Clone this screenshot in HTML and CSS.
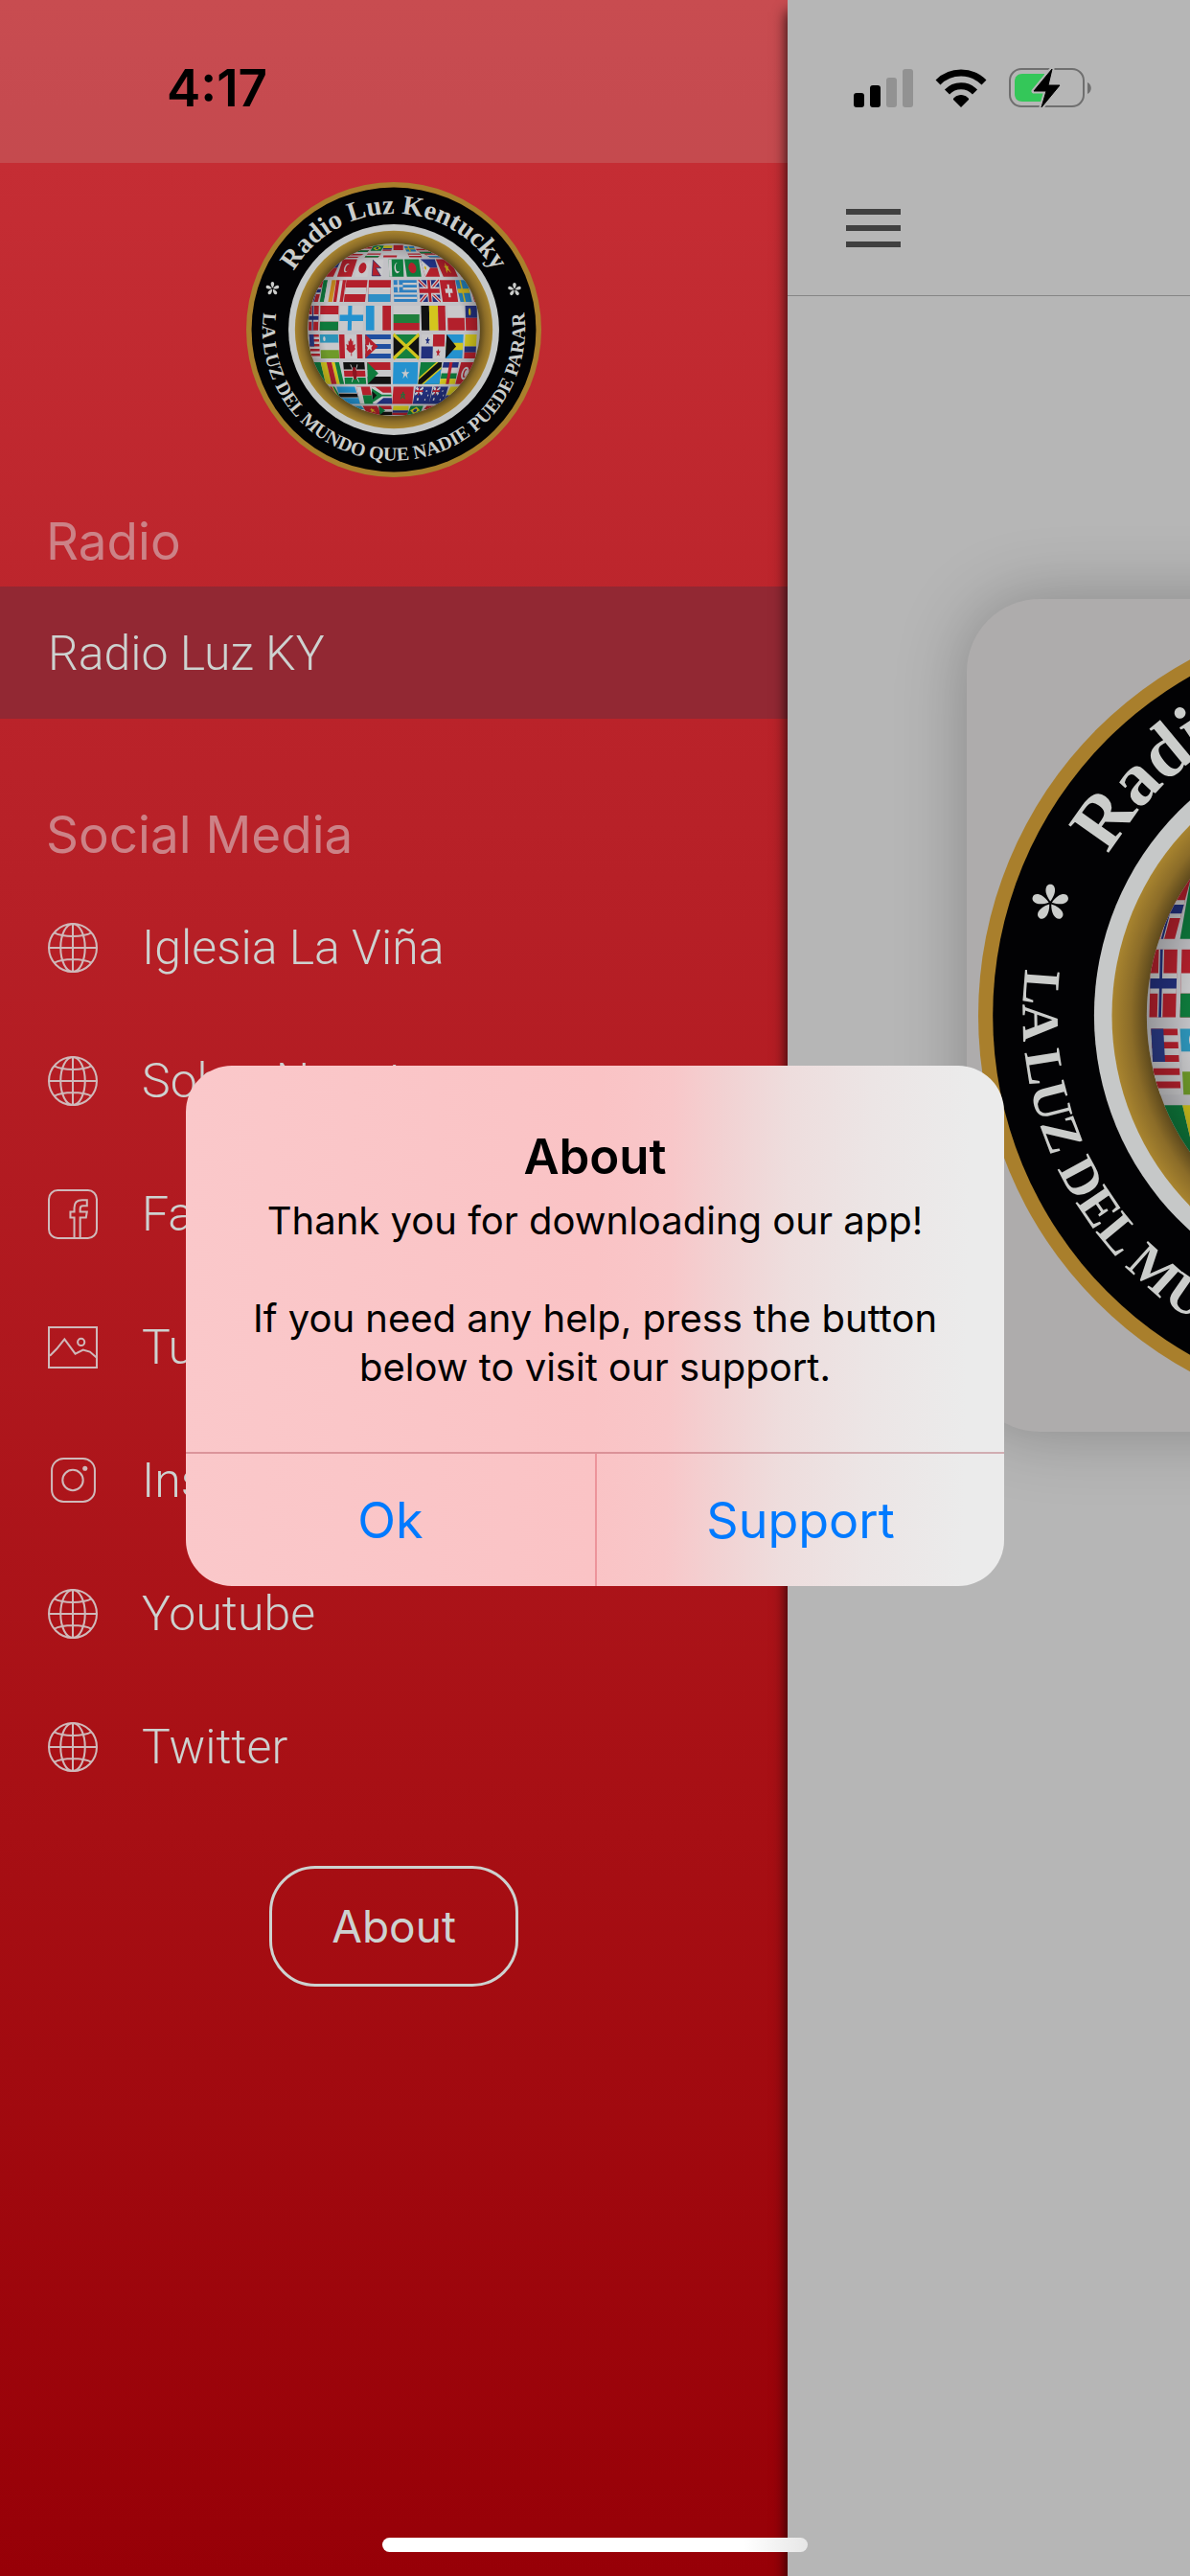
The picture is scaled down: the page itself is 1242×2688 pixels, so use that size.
FILE: index.html
```html
<!DOCTYPE html>
<html lang="en">
<head>
<meta charset="utf-8">
<meta name="viewport" content="width=device-width, initial-scale=1">
<title>Radio Luz KY</title>
<link rel="stylesheet" href="styles.css">
</head>
<body>
<svg class="defs" aria-hidden="true">
  <defs>
    <radialGradient id="ring" cx="0" cy="0" r="335" gradientUnits="userSpaceOnUse">
      <stop offset=".86" stop-color="#54421a"/>
      <stop offset=".93" stop-color="#8b6c28"/>
      <stop offset="1" stop-color="#a8842f"/>
    </radialGradient>
    <radialGradient id="shade" cx="0" cy="0" r="296" gradientUnits="userSpaceOnUse">
      <stop offset=".8" stop-color="#000" stop-opacity="0"/>
      <stop offset="1" stop-color="#000" stop-opacity=".25"/>
    </radialGradient>
    <clipPath id="ball"><circle r="292"/></clipPath>
    <path id="arc-top" d="M-393 0A393 393 0 0 1 393 0"/>
    <path id="arc-bottom" d="M-438 -80A445 445 0 1 0 438 -80"/>
    <g id="star">
      <path id="petal" d="M0-2C-9-14-6-23 0-23S9-14 0-2Z"/>
      <use href="#petal" transform="rotate(72)"/><use href="#petal" transform="rotate(144)"/>
      <use href="#petal" transform="rotate(216)"/><use href="#petal" transform="rotate(288)"/>
    </g>

    <!-- flags, each drawn in a 30 x 20 box -->
    <g id="f-red"><path fill="#b3202c" d="M0 0h30v20H0z"/></g>
    <g id="f-tr"><use href="#f-red"/><circle cx="14" cy="10" r="5" fill="#c8c8ca"/><circle cx="16" cy="10" r="4" fill="#b3202c"/></g>
    <g id="f-jp"><path fill="#c8c8ca" d="M0 0h30v20H0z"/><ellipse cx="15" cy="10" rx="9" ry="6" fill="#b3202c"/></g>
    <g id="f-np"><path fill="#c8c8ca" d="M0 0h30v20H0z"/><path fill="#b3202c" stroke="#1c2c6e" d="M3 1l22 9H12l14 9H3z"/></g>
    <g id="f-pk"><path fill="#0e7a3c" d="M0 0h30v20H0z"/><path fill="#c8c8ca" d="M0 0h6v20H0z"/><circle cx="17" cy="10" r="6" fill="#c8c8ca"/><circle cx="19" cy="9" r="5" fill="#0e7a3c"/></g>
    <g id="f-bd"><path fill="#0e7a3c" d="M0 0h30v20H0z"/><ellipse cx="14" cy="10" rx="8" ry="6" fill="#b3202c"/></g>
    <g id="f-ph"><path fill="#22348a" d="M0 0h30v10H0z"/><path fill="#b3202c" d="M0 10h30v10H0z"/><path fill="#c8c8ca" d="M0 0l15 10L0 20z"/><circle cx="5" cy="10" r="2" fill="#c9a820"/></g>
    <g id="f-vn"><use href="#f-red"/><path fill="#d1b81f" d="M15 4l5 12-10-8h10l-10 8z"/></g>
    <g id="f-ie"><path fill="#0e7a3c" d="M0 0h10v20H0z"/><path fill="#c8c8ca" d="M10 0h10v20H10z"/><path fill="#c98b1e" d="M20 0h10v20H20z"/></g>
    <g id="f-pe"><use href="#f-red"/><path fill="#c8c8ca" d="M10 0h10v20H10z"/></g>
    <g id="f-at"><use href="#f-red"/><path fill="#c8c8ca" d="M0 7h30v6H0z"/></g>
    <g id="f-lu"><use href="#f-red"/><path fill="#c8c8ca" d="M0 7h30v6H0z"/><path fill="#2d8fc6" d="M0 13h30v7H0z"/></g>
    <g id="f-gr"><path fill="#2d7fc0" d="M0 0h30v20H0z"/><path stroke="#c8c8ca" stroke-width="2" d="M12 3.500h18M12 8h18M0 12.500h30M0 16.500h30M0 5.500h12M6 0v11"/></g>
    <g id="f-uk"><path fill="#22307c" d="M0 0h30v20H0z"/><path stroke="#c8c8ca" stroke-width="4" d="M0 0l30 20M30 0L0 20"/><path stroke="#b3202c" stroke-width="1.500" d="M0 0l30 20M30 0L0 20"/><path stroke="#c8c8ca" stroke-width="7" d="M15 0v20M0 10h30"/><path stroke="#b3202c" stroke-width="4" d="M15 0v20M0 10h30"/></g>
    <g id="f-ch"><use href="#f-red"/><path stroke="#c8c8ca" stroke-width="4" d="M15 4v12M8 10h14"/></g>
    <g id="f-se"><path fill="#2481bb" d="M0 0h30v20H0z"/><path stroke="#d1b81f" stroke-width="4" d="M12 0v20M0 10h30"/></g>
    <g id="f-no"><use href="#f-red"/><path stroke="#c8c8ca" stroke-width="6" d="M12 0v20M0 10h30"/><path stroke="#22307c" stroke-width="3" d="M12 0v20M0 10h30"/></g>
    <g id="f-hu"><use href="#f-red"/><path fill="#c8c8ca" d="M0 7h30v6H0z"/><path fill="#0e7a3c" d="M0 13h30v7H0z"/></g>
    <g id="f-fi"><path fill="#c8c8ca" d="M0 0h30v20H0z"/><path stroke="#2492cf" stroke-width="5" d="M13 0v20M0 10h30"/></g>
    <g id="f-gt"><path fill="#c8c8ca" d="M0 0h30v20H0z"/><path fill="#2492cf" d="M0 0h10v20H0z"/><path fill="#b3202c" d="M20 0h10v20H20z"/></g>
    <g id="f-bg"><path fill="#c8c8ca" d="M0 0h30v7H0z"/><path fill="#1f7f3c" d="M0 7h30v7H0z"/><path fill="#b3202c" d="M0 14h30v6H0z"/></g>
    <g id="f-be"><path fill="#111" d="M0 0h10v20H0z"/><path fill="#d4c51d" d="M10 0h11v20H10z"/><path fill="#b3202c" d="M21 0h9v20h-9z"/></g>
    <g id="f-pl"><path fill="#c8c8ca" d="M0 0h30v10H0z"/><path fill="#b3202c" d="M0 10h30v10H0z"/></g>
    <g id="f-li"><path fill="#22307c" d="M0 0h30v10H0z"/><path fill="#b3202c" d="M0 10h30v10H0z"/><circle cx="11" cy="5" r="3" fill="#d1b81f"/></g>
    <g id="f-us"><path fill="#c8c8ca" d="M0 0h30v20H0z"/><path stroke="#b3202c" stroke-width="2" d="M0 1h30M0 5h30M0 9h30M0 13h30M0 17h30"/><path fill="#2b3b86" d="M0 0h14v10H0z"/></g>
    <g id="f-uz"><path fill="#2d93b8" d="M0 0h30v7H0z"/><path fill="#c8c8ca" d="M0 7h30v6H0z"/><path fill="#6f9a2a" d="M0 13h30v7H0z"/><circle cx="7" cy="3.500" r="2" fill="#c8c8ca"/></g>
    <g id="f-ca"><path fill="#c8c8ca" d="M0 0h30v20H0z"/><path fill="#b3202c" d="M0 0h7v20H0zM23 0h7v20h-7zM15 3l2 3 1-1v4l3-1-1 3 1 1-4 3h-1v3h-1v-3h-2l-4-3 1-1-1-3 3 1V5l1 1z"/></g>
    <g id="f-cu"><path fill="#c8c8ca" d="M0 0h30v20H0z"/><path stroke="#1f4fa0" stroke-width="4" d="M0 2h30M0 10h30M0 18h30"/><path fill="#b3202c" d="M0 0l15 10L0 20z"/><path fill="#c8c8ca" d="M5 6l1 3h3l-2 2 1 3-3-2-3 2 1-3-2-2h3z"/></g>
    <g id="f-jm"><path fill="#111" d="M0 0h30v20H0z"/><path fill="#14803e" d="M0 0h30L15 10zM0 20h30L15 10z"/><path stroke="#d1c41d" stroke-width="3" d="M0 0l30 20M30 0L0 20"/></g>
    <g id="f-pa"><path fill="#c8c8ca" d="M0 0h30v20H0z"/><path fill="#b3202c" d="M15 0h15v10H15zM22 12l1 2h2l-2 2 1 2-2-1-2 1 1-2-2-2h2z"/><path fill="#22307c" d="M0 10h15v10H0zM8 2l1 2h2L9 6l1 2-2-1-2 1 1-2-2-2h2z"/></g>
    <g id="f-bs"><path fill="#2492cf" d="M0 0h30v20H0z"/><path fill="#d1c41d" d="M0 7h30v6H0z"/><path fill="#111" d="M0 0l18 10L0 20z"/></g>
    <g id="f-co"><path fill="#d1c41d" d="M0 0h30v10H0z"/><path fill="#22307c" d="M0 10h30v5H0z"/><path fill="#b3202c" d="M0 15h30v5H0z"/></g>
    <g id="f-gn"><path fill="#0e7a3c" d="M0 0h8v20H0z"/><path fill="#d1c41d" d="M8 0h7v20H8zM21 0h4v20h-4z"/><path fill="#b3202c" d="M15 0h6v20h-6z"/><path fill="#0e7a3c" d="M25 0h5v20h-5z"/></g>
    <g id="f-ke"><path fill="#111" d="M0 0h30v7H0z"/><path fill="#b3202c" d="M0 7h30v6H0z"/><path fill="#0e7a3c" d="M0 14h30v6H0z"/><path stroke="#c8c8ca" d="M0 7h30M0 13.500h30M10 2l10 16M20 2L10 18"/><ellipse cx="15" cy="10" rx="3" ry="6" fill="#8b1420"/></g>
    <g id="f-sd"><path fill="#b3202c" d="M0 0h30v7H0z"/><path fill="#c8c8ca" d="M0 7h30v6H0z"/><path fill="#111" d="M0 13h30v7H0z"/><path fill="#0e7a3c" d="M0 0l14 10L0 20z"/></g>
    <g id="f-so"><path fill="#2492cf" d="M0 0h30v20H0z"/><path fill="#c8c8ca" d="M15 5l1 4h4l-3 2 1 4-3-3-3 3 1-4-3-2h4z"/></g>
    <g id="f-tz"><path fill="#0e7a3c" d="M0 0h30v20H0z"/><path fill="#2492cf" d="M30 0v20H0z"/><path fill="#d1c41d" d="M0 20v-6L22 0h8v6L8 20z"/><path fill="#111" d="M0 20v-4L25 0h5v4L5 20z"/></g>
    <g id="f-cf"><path fill="#22307c" d="M0 0h30v5H0z"/><path fill="#c8c8ca" d="M0 5h30v5H0z"/><path fill="#0e7a3c" d="M0 10h30v5H0z"/><path fill="#d1c41d" d="M0 15h30v5H0z"/><path fill="#b3202c" d="M12 0h6v20h-6z"/></g>
    <g id="f-tn"><use href="#f-red"/><ellipse cx="15" cy="10" rx="8" ry="6" fill="#c8c8ca"/><circle cx="15" cy="10" r="4" fill="#b3202c"/><circle cx="17" cy="10" r="3" fill="#c8c8ca"/></g>
    <g id="f-bw"><path fill="#2492cf" d="M0 0h30v20H0z"/><path fill="#c8c8ca" d="M0 7h30v6H0z"/><path fill="#111" d="M0 8h30v4H0z"/></g>
    <g id="f-mg"><path fill="#b3202c" d="M0 0h30v10H0z"/><path fill="#0e7a3c" d="M0 10h30v10H0z"/><path fill="#c8c8ca" d="M0 0h10v20H0z"/></g>
    <g id="f-za"><path fill="#b3202c" d="M0 0h30v8H0z"/><path fill="#22307c" d="M0 12h30v8H0z"/><path fill="#c8c8ca" d="M0 0h5l12 7h13v6H17L5 20H0z"/><path fill="#0e7a3c" d="M0 2l15 7h15v2H15L0 18z"/><path fill="#111" d="M0 5l7 5-7 5z"/></g>
    <g id="f-ma"><use href="#f-red"/><path stroke="#0e7a3c" fill="none" d="M15 6l3 8-6-5h6l-6 5z"/></g>
    <g id="f-au"><path fill="#22307c" d="M0 0h30v20H0z"/><path stroke="#c8c8ca" stroke-width="3" d="M1 1l13 8M14 1L1 9"/><path stroke="#b3202c" stroke-width="2" d="M7 0v10M0 5h15"/><path fill="#c8c8ca" d="M6 13h3v3H6zM20 4h2v2h-2zM24 9h2v2h-2zM20 14h2v2h-2z"/></g>
    <g id="f-br"><path fill="#0e7a3c" d="M0 0h30v20H0z"/><path fill="#d1c41d" d="M15 2l12 8-12 8L3 10z"/><circle cx="15" cy="10" r="4" fill="#22307c"/></g>

    <symbol id="seal" viewBox="-500 -500 1000 1000">
      <circle r="500" fill="#a97f2c"/>
      <circle r="482" fill="#020204"/>
      <circle r="357" fill="#c6c8c8"/>
      <circle r="335" fill="url(#ring)"/>
      <circle r="292" fill="#c2c2c6"/>
      <g clip-path="url(#ball)">
        <g transform="scale(1.086) translate(-483 -490)">
          <use href="#f-hu" transform="matrix(1.1 0 -.9 .8 385 232)"/>
          <use href="#f-br" transform="matrix(1.1 0 -.5 .8 420 228)"/>
          <use href="#f-co" transform="matrix(.9 0 -.2 .8 452 228)"/>
          <use href="#f-red" transform="matrix(1 0 0 .8 482 226)"/>
          <use href="#f-se" transform="matrix(1 0 .4 .8 515 230)"/>
          <use href="#f-hu" transform="matrix(1.2 0 .9 .7 550 238)"/>
          <use href="#f-at" transform="matrix(1.3 0 -1 .6 350 254)"/>
          <use href="#f-hu" transform="matrix(1.4 0 -.5 .6 402 252)"/>
          <use href="#f-pl" transform="matrix(1.4 0 -.1 .6 452 252)"/>
          <use href="#f-at" transform="matrix(1.3 0 .3 .6 526 252)"/>
          <use href="#f-lu" transform="matrix(1.5 0 1 .6 575 252)"/>

          <use href="#f-li" transform="matrix(1 0 -1.300 2.750 290 270)"/>
          <use href="#f-tr" transform="matrix(1.500 0 -.9 2.750 324 270)"/>
          <use href="#f-jp" transform="matrix(1.300 0 -.5 2.750 371 270)"/>
          <use href="#f-np" transform="matrix(1.200 0 -.2 2.750 415 270)"/>
          <use href="#f-pk" transform="matrix(1.500 0 .1 2.750 467 270)"/>
          <use href="#f-bd" transform="matrix(1.500 0 .4 2.750 516 270)"/>
          <use href="#f-ph" transform="matrix(1.500 0 .8 2.750 566 270)"/>
          <use href="#f-vn" transform="matrix(1.500 0 1.200 2.750 614 270)"/>
          <use href="#f-li" transform="matrix(1 0 1.600 2.750 662 270)"/>

          <use href="#f-no" transform="matrix(.8 0 -.9 3.400 240 335)"/>
          <use href="#f-ie" transform="matrix(1.300 0 -.6 3.400 264 335)"/>
          <use href="#f-pe" transform="matrix(1 0 -.5 3.400 304 335)"/>
          <use href="#f-at" transform="matrix(2.200 0 -.4 3.400 335 335)"/>
          <use href="#f-lu" transform="matrix(2.300 0 -.1 3.400 405 335)"/>
          <use href="#f-gr" transform="matrix(2.400 0 .1 3.400 482 335)"/>
          <use href="#f-uk" transform="matrix(2.100 0 .3 3.400 560 335)"/>
          <use href="#f-ch" transform="matrix(1.600 0 .5 3.400 626 335)"/>
          <use href="#f-se" transform="matrix(1.200 0 .8 3.400 675 335)"/>
          <use href="#f-no" transform="matrix(.8 0 1 3.400 715 335)"/>

          <use href="#f-no" transform="matrix(1 0 -.1 3.850 219 415)"/>
          <use href="#f-hu" transform="matrix(1.900 0 -.1 3.850 254 415)"/>
          <use href="#f-fi" transform="matrix(2.450 0 -.1 3.850 315 415)"/>
          <use href="#f-gt" transform="matrix(2.600 0 0 3.850 396 415)"/>
          <use href="#f-bg" transform="matrix(2.700 0 0 3.850 482 415)"/>
          <use href="#f-be" transform="matrix(2.500 0 .1 3.850 568 415)"/>
          <use href="#f-pl" transform="matrix(1.750 0 .1 3.850 650 415)"/>
          <use href="#f-li" transform="matrix(1.200 0 .1 3.850 706 415)"/>

          <use href="#f-us" transform="matrix(1 0 .2 3.750 219 505)"/>
          <use href="#f-uz" transform="matrix(1.900 0 .2 3.750 252 505)"/>
          <use href="#f-ca" transform="matrix(2.400 0 .1 3.750 312 505)"/>
          <use href="#f-cu" transform="matrix(2.650 0 0 3.750 394 505)"/>
          <use href="#f-jm" transform="matrix(2.650 0 0 3.750 482 505)"/>
          <use href="#f-pa" transform="matrix(2.400 0 -.1 3.750 570 505)"/>
          <use href="#f-bs" transform="matrix(1.750 0 -.2 3.750 648 505)"/>
          <use href="#f-co" transform="matrix(1.200 0 -.2 3.750 706 505)"/>

          <use href="#f-gn" transform="matrix(2.600 0 .8 3.400 234 592)"/>
          <use href="#f-ke" transform="matrix(2.200 0 .3 3.400 325 592)"/>
          <use href="#f-sd" transform="matrix(2.400 0 .1 3.400 400 592)"/>
          <use href="#f-so" transform="matrix(2.550 0 -.1 3.400 482 592)"/>
          <use href="#f-tz" transform="matrix(2.200 0 -.4 3.400 567 592)"/>
          <use href="#f-cf" transform="matrix(1.600 0 -.6 3.400 638 592)"/>
          <use href="#f-tn" transform="matrix(1.400 0 -.9 3.400 693 592)"/>

          <use href="#f-gn" transform="matrix(1 0 1.500 2.700 268 668)"/>
          <use href="#f-bw" transform="matrix(1.900 0 .9 2.700 304 668)"/>
          <use href="#f-mg" transform="matrix(1.400 0 .6 2.700 366 668)"/>
          <use href="#f-za" transform="matrix(2 0 .2 2.700 414 668)"/>
          <use href="#f-ma" transform="matrix(2.100 0 -.2 2.700 482 668)"/>
          <use href="#f-au" transform="matrix(1.700 0 -.5 2.700 552 668)"/>
          <use href="#f-au" transform="matrix(1.500 0 -.8 2.700 608 668)"/>
          <use href="#f-co" transform="matrix(1.200 0 -1.300 2.700 660 668)"/>

          <use href="#f-uz" transform="matrix(1.300 0 1.400 1.400 342 728)"/>
          <use href="#f-vn" transform="matrix(1.500 0 .8 1.400 386 728)"/>
          <use href="#f-sd" transform="matrix(1.300 0 .2 1.400 436 728)"/>
          <use href="#f-co" transform="matrix(1.600 0 -.2 1.400 482 728)"/>
          <use href="#f-br" transform="matrix(1.300 0 -.6 1.400 536 728)"/>
          <use href="#f-at" transform="matrix(1.300 0 -1.200 1.400 586 728)"/>
        </g>
      </g>
      <circle r="292" fill="url(#shade)"/>
      <g fill="#cbcdcb" font-family="'Liberation Serif', 'Times New Roman', serif" font-weight="700" text-anchor="middle">
        <text font-size="92"><textPath href="#arc-top" startOffset="50%">Radio Luz Kentucky</textPath></text>
        <text font-size="65"><textPath href="#arc-bottom" startOffset="50%">LA LUZ DEL MUNDO QUE NADIE PUEDE PARAR</textPath></text>
        <use href="#star" x="-411" y="-139"/>
        <use href="#star" x="409" y="-136"/>
      </g>
    </symbol>

    <symbol id="i-globe" viewBox="0 0 51 51">
      <g fill="none" stroke="currentColor" stroke-width="2">
        <circle cx="25.500" cy="25.500" r="24.500"/>
        <ellipse cx="25.500" cy="25.500" rx="12.500" ry="24.500"/>
        <path d="M25.500 1v49M1 25.500h49M6 10c10 5 29 5 39 0M6 41c10-5 29-5 39 0"/>
      </g>
    </symbol>
    <symbol id="i-facebook" viewBox="0 0 51 51">
      <g fill="none" stroke="currentColor" stroke-width="2">
        <rect x="1" y="1" width="49" height="49" rx="9"/>
        <path d="M27 50V29h-4v-6h4v-4c0-6 4-8 8-8h5v6h-4c-2 0-3 1-3 3v3h7l-1 6h-6v21"/>
      </g>
    </symbol>
    <symbol id="i-picture" viewBox="0 0 51 51">
      <g fill="none" stroke="currentColor" stroke-width="2">
        <path d="M1 5h49v41H1zM2 34l7-7 8-10 11 15 8-4 7 2 7 6"/>
        <circle cx="34" cy="20" r="3.500"/>
      </g>
    </symbol>
    <symbol id="i-instagram" viewBox="0 0 51 51">
      <g fill="none" stroke="currentColor" stroke-width="2">
        <rect x="4" y="3" width="44" height="44" rx="12"/>
        <circle cx="25.500" cy="25" r="10.500"/>
      </g>
      <circle cx="38" cy="13" r="2.500" fill="currentColor"/>
    </symbol>
  </defs>
</svg>

<div class="app">
  <nav class="drawer" aria-label="Menu">
    <div class="drawer-status"><time class="clock">4:17</time></div>
    <svg class="drawer-logo" role="img" aria-label="Radio Luz Kentucky"><use href="#seal"/></svg>
    <h2 class="section-title">Radio</h2>
    <a class="station" href="#radio">Radio Luz KY</a>
    <h2 class="section-title section-title-social">Social Media</h2>
    <ul class="links">
      <li><a class="link" href="#iglesia"><svg class="link-icon"><use href="#i-globe"/></svg>Iglesia La Viña</a></li>
      <li><a class="link" href="#sobre"><svg class="link-icon"><use href="#i-globe"/></svg>Sobre Nosotros</a></li>
      <li><a class="link" href="#facebook"><svg class="link-icon"><use href="#i-facebook"/></svg>Facebook</a></li>
      <li><a class="link" href="#tunein"><svg class="link-icon"><use href="#i-picture"/></svg>Tunein</a></li>
      <li><a class="link" href="#instagram"><svg class="link-icon"><use href="#i-instagram"/></svg>Instagram</a></li>
      <li><a class="link" href="#youtube"><svg class="link-icon"><use href="#i-globe"/></svg>Youtube</a></li>
      <li><a class="link" href="#twitter"><svg class="link-icon"><use href="#i-globe"/></svg>Twitter</a></li>
    </ul>
    <button class="about-button" type="button">About</button>
  </nav>

  <main class="screen">
    <div class="screen-status">
      <svg class="signal" viewBox="0 0 62 40" aria-label="Signal">
        <rect y="25" width="11" height="15" rx="3"/><rect x="17" y="17" width="11" height="23" rx="3"/>
        <g fill="#929292"><rect x="34" y="9" width="11" height="31" rx="3"/><rect x="51" width="11" height="40" rx="3"/></g>
      </svg>
      <svg class="wifi" viewBox="0 0 54 40" aria-label="Wi-Fi">
        <path d="M27 40l-8-8c-1-1 3-5 8-5s9 4 8 5z"/>
        <path fill="none" stroke="#000" stroke-width="7" d="M12.500 24a20 20 0 0 1 29 0M3 14a34 34 0 0 1 48 0"/>
      </svg>
      <svg class="battery" viewBox="0 0 87 44" aria-label="Battery charging">
        <rect x="1" y="2" width="77" height="39" rx="12" fill="none" stroke="#6f6f6f" stroke-width="2"/>
        <path fill="#6f6f6f" d="M82 16c5 2 5 10 0 12z"/>
        <path fill="#34c759" d="M14 7h23v29H14c-5 0-8-3-8-8V15c0-5 3-8 8-8z"/>
        <path stroke="#b6b6b6" stroke-width="5" stroke-linejoin="round" d="M45 2L26 25h13l-5 17L53 19H41z"/>
        <path stroke="#000" stroke-linejoin="round" d="M45 2L26 25h13l-5 17L53 19H41z"/>
      </svg>
    </div>
    <header class="toolbar">
      <button class="menu-button" type="button" aria-label="Open menu"><span></span><span></span><span></span></button>
    </header>
    <div class="stage">
      <div class="cover"><svg class="cover-logo" role="img" aria-label="Radio Luz Kentucky"><use href="#seal"/></svg></div>
    </div>
  </main>

  <div class="overlay">
    <section class="alert" role="alertdialog" aria-labelledby="alert-title" aria-describedby="alert-text">
      <div class="alert-body">
        <h1 class="alert-title" id="alert-title">About</h1>
        <div class="alert-text" id="alert-text">
          <p>Thank you for downloading our app!</p>
          <p>If you need any help, press the button below to visit our support.</p>
        </div>
      </div>
      <div class="alert-actions">
        <button class="alert-action" type="button">Ok</button>
        <button class="alert-action" type="button">Support</button>
      </div>
    </section>
  </div>
  <div class="home-indicator"></div>
</div>
</body>
</html>
```
FILE: styles.css
```css
* {
  box-sizing: border-box;
}

body {
  margin: 0;
  background: #b6b6b6;
  font-family: Inter, "Liberation Sans", sans-serif;
}

h1, h2, p, ul {
  margin: 0;
  padding: 0;
}

button {
  padding: 0;
  border: 0;
  background: none;
  font-family: inherit;
}

.defs {
  position: absolute;
  width: 0;
  height: 0;
}

.app {
  position: relative;
  display: grid;
  grid-template-columns: 66.2% minmax(0, 1fr);
  min-height: 100vh;
  overflow: hidden;
}

/* Drawer */
.drawer {
  display: flex;
  flex-direction: column;
  padding-bottom: 80px;
  background: linear-gradient(#c83037, #b72027 34%, #a70f14 71%, #970007);
  color: #cdd2d0;
}

.drawer-status {
  height: 170px;
  padding: 14px 0 0 174px;
  display: flex;
  align-items: center;
  background: rgba(200, 178, 172, 0.22);
}

.clock {
  color: #000;
  font-size: 53px;
  font-weight: 600;
}

.drawer-logo {
  width: 308px;
  height: 308px;
  margin: 20px auto 0;
}

.section-title {
  margin: 37px 48px 17px;
  color: #cc8287;
  font-size: 53px;
  font-weight: 400;
  line-height: 60px;
}

.section-title-social {
  margin-top: 91px;
}

.station, .link {
  display: flex;
  align-items: center;
  padding: 2px 50px 0;
  color: inherit;
  font-family: Roboto, "Liberation Sans", sans-serif;
  font-size: 50px;
  font-weight: 300;
  text-decoration: none;
}

.station {
  height: 138px;
  background: #922833;
}

.links {
  list-style: none;
}

.link {
  height: 139px;
  gap: 46px;
}

.link-icon {
  width: 52px;
  height: 52px;
  color: #cfb9ba;
}

.about-button {
  align-self: center;
  width: 260px;
  height: 126px;
  margin-top: 56px;
  border: 3px solid #cdd2d0;
  border-radius: 48px;
  color: inherit;
  font-size: 46px;
}

/* Screen pushed aside by the drawer */
.screen {
  width: 100vw;
  background: #b6b6b6;
  box-shadow: 0 12px 14px rgba(0, 0, 0, 0.9);
}

.screen-status {
  display: flex;
  align-items: center;
  gap: 23px;
  height: 170px;
  padding: 14px 0 0 69px;
}

.signal {
  width: 62px;
  height: 40px;
}

.wifi {
  width: 54px;
  height: 40px;
}

.battery {
  width: 87px;
  height: 44px;
}

.toolbar {
  display: flex;
  align-items: center;
  height: 139px;
  padding: 0 61px 2px;
  border-bottom: 1px solid #858585;
}

.menu-button {
  display: grid;
  gap: 11px;
  width: 57px;
}

.menu-button span {
  height: 6px;
  background: #404040;
}

.stage {
  display: grid;
  place-items: center;
  padding-top: 316px;
}

.cover {
  display: grid;
  width: 70vw;
  padding: 12px;
  border-radius: 76px;
  background: #aeacac;
  box-shadow: 0 0 72px rgba(0, 0, 0, 0.26);
}

.cover-logo {
  width: 100%;
  height: auto;
  aspect-ratio: 1;
}

/* Alert */
.overlay {
  position: absolute;
  inset: 0;
  display: grid;
  place-items: center;
  padding-top: 79px;
}

.alert {
  width: 854px;
  max-width: 90%;
  overflow: hidden;
  border-radius: 48px;
  background: linear-gradient(91deg, #fac8ca, #fac3c5 50%, #f8c7c9 59%, #f2d1d2 65%, #eedddd 73%, #ece5e5 83%, #ebebeb 95%);
  color: #000;
  text-align: center;
}

.alert-body {
  padding: 60px 56px 63px;
}

.alert-title {
  font-size: 51px;
  font-weight: 600;
  line-height: 70px;
}

.alert-text {
  display: grid;
  gap: 51px;
  margin-top: 6px;
  font-size: 40px;
  line-height: 51px;
}

.alert-actions {
  display: grid;
  grid-template-columns: 1fr 1fr;
  border-top: 2px solid rgba(150, 30, 45, 0.3);
}

.alert-action {
  height: 138px;
  color: #007aff;
  font-size: 52px;
}

.alert-action + .alert-action {
  border-left: 2px solid rgba(210, 60, 75, 0.35);
}

.home-indicator {
  position: absolute;
  bottom: 25px;
  left: 50%;
  width: 444px;
  height: 15px;
  margin-left: -222px;
  border-radius: 8px;
  background: linear-gradient(90deg, #fff 85%, #e6e6e6);
}
```
